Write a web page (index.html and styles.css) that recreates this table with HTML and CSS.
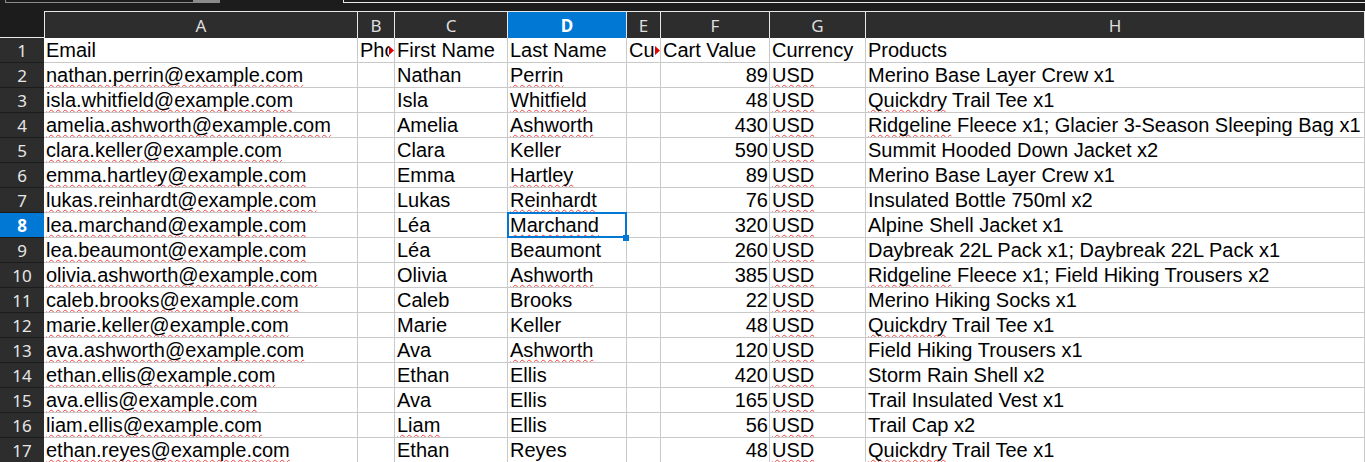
FILE: index.html
```html
<!DOCTYPE html>
<html lang="en">
<head>
<meta charset="utf-8">
<title>Sheet</title>
<link rel="stylesheet" href="styles.css">
</head>
<body>
<div class="topbar">
  <div class="namebox"><div class="drop"></div></div>
  <div class="formula"></div>
</div>
<div class="sheet">
  <div class="corner"></div>
  <div class="ch first">A</div><div class="ch">B</div><div class="ch">C</div><div class="ch sel">D</div><div class="ch">E</div><div class="ch">F</div><div class="ch">G</div><div class="ch">H</div>

  <div class="rh">1</div><div class="c">Email</div><div class="c cut"><span class="clip">Phone</span><span class="more"></span></div><div class="c">First Name</div><div class="c">Last Name</div><div class="c cut"><span class="clip">Customer</span><span class="more"></span></div><div class="c">Cart Value</div><div class="c">Currency</div><div class="c">Products</div>

  <div class="rh">2</div><div class="c"><span class="sp">nathan.perrin@example.com</span></div><div class="c"></div><div class="c">Nathan</div><div class="c"><span class="sp">Perrin</span></div><div class="c"></div><div class="c num">89</div><div class="c"><span class="sp">USD</span></div><div class="c">Merino Base Layer Crew x1</div>

  <div class="rh">3</div><div class="c"><span class="sp">isla.whitfield@example.com</span></div><div class="c"></div><div class="c">Isla</div><div class="c"><span class="sp">Whitfield</span></div><div class="c"></div><div class="c num">48</div><div class="c"><span class="sp">USD</span></div><div class="c"><span class="sp">Quickdry</span> Trail Tee x1</div>

  <div class="rh">4</div><div class="c"><span class="sp">amelia.ashworth@example.com</span></div><div class="c"></div><div class="c">Amelia</div><div class="c"><span class="sp">Ashworth</span></div><div class="c"></div><div class="c num">430</div><div class="c"><span class="sp">USD</span></div><div class="c"><span class="sp">Ridgeline</span> Fleece x1; Glacier 3-Season Sleeping Bag x1</div>

  <div class="rh">5</div><div class="c"><span class="sp">clara.keller@example.com</span></div><div class="c"></div><div class="c">Clara</div><div class="c">Keller</div><div class="c"></div><div class="c num">590</div><div class="c"><span class="sp">USD</span></div><div class="c">Summit Hooded Down Jacket x2</div>

  <div class="rh">6</div><div class="c"><span class="sp">emma.hartley@example.com</span></div><div class="c"></div><div class="c">Emma</div><div class="c"><span class="sp">Hartley</span></div><div class="c"></div><div class="c num">89</div><div class="c"><span class="sp">USD</span></div><div class="c">Merino Base Layer Crew x1</div>

  <div class="rh">7</div><div class="c"><span class="sp">lukas.reinhardt@example.com</span></div><div class="c"></div><div class="c">Lukas</div><div class="c"><span class="sp">Reinhardt</span></div><div class="c"></div><div class="c num">76</div><div class="c"><span class="sp">USD</span></div><div class="c">Insulated Bottle 750ml x2</div>

  <div class="rh sel">8</div><div class="c"><span class="sp">lea.marchand@example.com</span></div><div class="c"></div><div class="c">Léa</div><div class="c active"><span class="sp">Marchand</span><span class="cursor"><span class="handle"></span></span></div><div class="c"></div><div class="c num">320</div><div class="c"><span class="sp">USD</span></div><div class="c">Alpine Shell Jacket x1</div>

  <div class="rh">9</div><div class="c"><span class="sp">lea.beaumont@example.com</span></div><div class="c"></div><div class="c">Léa</div><div class="c">Beaumont</div><div class="c"></div><div class="c num">260</div><div class="c"><span class="sp">USD</span></div><div class="c">Daybreak 22L Pack x1; Daybreak 22L Pack x1</div>

  <div class="rh">10</div><div class="c"><span class="sp">olivia.ashworth@example.com</span></div><div class="c"></div><div class="c">Olivia</div><div class="c"><span class="sp">Ashworth</span></div><div class="c"></div><div class="c num">385</div><div class="c"><span class="sp">USD</span></div><div class="c"><span class="sp">Ridgeline</span> Fleece x1; Field Hiking Trousers x2</div>

  <div class="rh">11</div><div class="c"><span class="sp">caleb.brooks@example.com</span></div><div class="c"></div><div class="c">Caleb</div><div class="c">Brooks</div><div class="c"></div><div class="c num">22</div><div class="c"><span class="sp">USD</span></div><div class="c">Merino Hiking Socks x1</div>

  <div class="rh">12</div><div class="c"><span class="sp">marie.keller@example.com</span></div><div class="c"></div><div class="c">Marie</div><div class="c">Keller</div><div class="c"></div><div class="c num">48</div><div class="c"><span class="sp">USD</span></div><div class="c"><span class="sp">Quickdry</span> Trail Tee x1</div>

  <div class="rh">13</div><div class="c"><span class="sp">ava.ashworth@example.com</span></div><div class="c"></div><div class="c">Ava</div><div class="c"><span class="sp">Ashworth</span></div><div class="c"></div><div class="c num">120</div><div class="c"><span class="sp">USD</span></div><div class="c">Field Hiking Trousers x1</div>

  <div class="rh">14</div><div class="c"><span class="sp">ethan.ellis@example.com</span></div><div class="c"></div><div class="c">Ethan</div><div class="c">Ellis</div><div class="c"></div><div class="c num">420</div><div class="c"><span class="sp">USD</span></div><div class="c">Storm Rain Shell x2</div>

  <div class="rh">15</div><div class="c"><span class="sp">ava.ellis@example.com</span></div><div class="c"></div><div class="c">Ava</div><div class="c">Ellis</div><div class="c"></div><div class="c num">165</div><div class="c"><span class="sp">USD</span></div><div class="c">Trail Insulated Vest x1</div>

  <div class="rh">16</div><div class="c"><span class="sp">liam.ellis@example.com</span></div><div class="c"></div><div class="c"><span class="sp">Liam</span></div><div class="c">Ellis</div><div class="c"></div><div class="c num">56</div><div class="c"><span class="sp">USD</span></div><div class="c">Trail Cap x2</div>

  <div class="rh">17</div><div class="c"><span class="sp">ethan.reyes@example.com</span></div><div class="c"></div><div class="c">Ethan</div><div class="c">Reyes</div><div class="c"></div><div class="c num">48</div><div class="c"><span class="sp">USD</span></div><div class="c"><span class="sp">Quickdry</span> Trail Tee x1</div>
</div>
</body>
</html>
```

FILE: styles.css
```css
* { box-sizing: border-box; }
html, body { margin: 0; padding: 0; }
body {
  width: 1365px;
  height: 462px;
  overflow: hidden;
  background: #ffffff;
  font-family: "Liberation Sans", Arial, sans-serif;
}
.topbar {
  height: 11px;
  background: #1c1c1c;
  display: flex;
  align-items: flex-start;
}
.namebox {
  margin-left: 5px;
  width: 215px;
  height: 3px;
  border: 1px solid #8a8a8a;
  border-top: none;
  display: flex;
  justify-content: flex-end;
}
.namebox .drop {
  width: 26px;
  height: 2px;
  background: #8a8a8a;
}
.formula {
  margin-left: 123px;
  flex: 1;
  height: 3px;
  border-left: 1px solid #e8e8e8;
  border-bottom: 1px solid #e8e8e8;
}
.sheet {
  display: grid;
  grid-template-columns: 44px 314px 37px 113px 119px 34px 109px 96px 1fr;
  grid-template-rows: 27px repeat(17, 25px);
}
.corner {
  background: #1c1c1c;
  border-bottom: 1px solid #e8e8e8;
}
.ch {
  background: #2d2d2d;
  border-top: 1px solid #e8e8e8;
  border-right: 1px solid #e8e8e8;
  color: #dedede;
  font-family: "Noto Sans", "DejaVu Sans", sans-serif;
  font-size: 17px;
  display: flex;
  align-items: center;
  justify-content: center;
}
.ch.first { border-left: 1px solid #e8e8e8; }
.ch.sel, .rh.sel {
  background: #0078d4;
  color: #ffffff;
  font-weight: 700;
}
.rh {
  background: #2d2d2d;
  border-bottom: 1px solid #1c1c1c;
  color: #e6e6e6;
  font-family: "Noto Sans", "DejaVu Sans", sans-serif;
  font-size: 17px;
  display: flex;
  align-items: center;
  justify-content: center;
}
.c {
  position: relative;
  border-right: 1px solid #c9c9c9;
  border-bottom: 1px solid #c9c9c9;
  padding: 1px 2px 0 2px;
  line-height: 23px;
  font-size: 20px;
  color: #000;
  white-space: nowrap;
  overflow: hidden;
}
.c.cut {
  display: flex;
  align-items: flex-start;
  padding-right: 0;
}
.c.cut .clip {
  flex: 1;
  min-width: 0;
  overflow: hidden;
}
.c.active { overflow: visible; z-index: 2; }
.num { text-align: right; padding-right: 1px; }
.sp {
  text-decoration: underline wavy #f04040;
  text-decoration-thickness: 1px;
  text-underline-offset: 2px;
  text-decoration-skip-ink: none;
}
.more {
  flex: none;
  display: block;
  width: 5px;
  height: 9px;
  margin-top: 7px;
  background: #e00000;
  clip-path: polygon(0 0, 100% 50%, 0 100%);
}
.cursor {
  position: absolute;
  top: -1px;
  left: -1px;
  right: -1px;
  bottom: -1px;
  border: 2px solid #0078d4;
}
.handle {
  position: absolute;
  right: -4px;
  bottom: -5px;
  width: 6px;
  height: 6px;
  background: #0078d4;
}
```
